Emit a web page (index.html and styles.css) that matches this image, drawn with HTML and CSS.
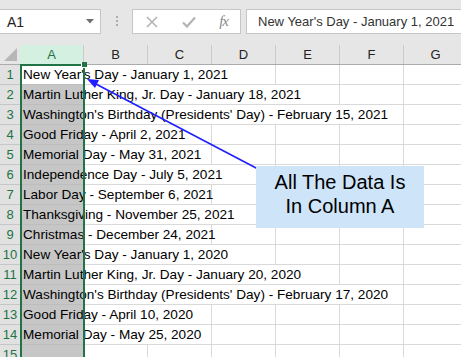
FILE: index.html
```html
<!DOCTYPE html>
<html lang="en">
<head>
    <meta charset="UTF-8">
    <title>Holidays - Column A</title>
    <link rel="stylesheet" href="styles.css">
</head>
<body>
<div class="window">
    <!-- name box + formula bar -->
    <div class="topbar">
        <div class="name-box">
            <span>A1</span>
            <svg class="caret" width="8" height="5" viewBox="0 0 8 5"><polygon points="0,0 8,0 4,4.5" fill="#707070"/></svg>
        </div>
        <div class="grip"><i></i><i></i><i></i></div>
        <div class="fx-buttons">
            <svg width="12" height="12" viewBox="0 0 12 12"><path d="M1 1 L11 11 M11 1 L1 11" stroke="#b3b3b3" stroke-width="1.6" fill="none"/></svg>
            <svg width="14" height="12" viewBox="0 0 14 12"><path d="M1 6.5 L5 10.5 L13 1.5" stroke="#b3b3b3" stroke-width="2.2" fill="none"/></svg>
            <span class="fx">fx</span>
        </div>
        <div class="formula">New Year's Day - January 1, 2021</div>
    </div>

    <div class="sheet">
        <div class="row head">
            <div class="corner"><svg width="20" height="19" viewBox="0 0 20 19"><polygon points="17,3 17,16 4,16" fill="#b7b7b7"/></svg></div>
            <div class="col sel">A</div>
            <div class="col">B</div>
            <div class="col">C</div>
            <div class="col">D</div>
            <div class="col">E</div>
            <div class="col">F</div>
            <div class="col">G</div>
        </div>

        <div class="row"><div class="rh">1</div><div class="cell a active"><span>New Year's Day - January 1, 2021</span></div><div class="cell span3"></div><div class="cell"></div><div class="cell"></div><div class="cell"></div></div>
        <div class="row"><div class="rh">2</div><div class="cell a"><span>Martin Luther King, Jr. Day - January 18, 2021</span></div><div class="cell span4"></div><div class="cell"></div><div class="cell"></div></div>
        <div class="row"><div class="rh">3</div><div class="cell a"><span>Washington's Birthday (Presidents' Day) - February 15, 2021</span></div><div class="cell span5"></div><div class="cell"></div></div>
        <div class="row"><div class="rh">4</div><div class="cell a"><span>Good Friday - April 2, 2021</span></div><div class="cell span2"></div><div class="cell"></div><div class="cell"></div><div class="cell"></div><div class="cell"></div></div>
        <div class="row"><div class="rh">5</div><div class="cell a"><span>Memorial Day - May 31, 2021</span></div><div class="cell span2"></div><div class="cell"></div><div class="cell"></div><div class="cell"></div><div class="cell"></div></div>
        <div class="row"><div class="rh">6</div><div class="cell a"><span>Independence Day - July 5, 2021</span></div><div class="cell span3"></div><div class="cell"></div><div class="cell"></div><div class="cell"></div></div>
        <div class="row"><div class="rh">7</div><div class="cell a"><span>Labor Day - September 6, 2021</span></div><div class="cell span2"></div><div class="cell"></div><div class="cell"></div><div class="cell"></div><div class="cell"></div></div>
        <div class="row"><div class="rh">8</div><div class="cell a"><span>Thanksgiving - November 25, 2021</span></div><div class="cell span3"></div><div class="cell"></div><div class="cell"></div><div class="cell"></div></div>
        <div class="row"><div class="rh">9</div><div class="cell a"><span>Christmas - December 24, 2021</span></div><div class="cell span2"></div><div class="cell"></div><div class="cell"></div><div class="cell"></div><div class="cell"></div></div>
        <div class="row"><div class="rh">10</div><div class="cell a"><span>New Year's Day - January 1, 2020</span></div><div class="cell span3"></div><div class="cell"></div><div class="cell"></div><div class="cell"></div></div>
        <div class="row"><div class="rh">11</div><div class="cell a"><span>Martin Luther King, Jr. Day - January 20, 2020</span></div><div class="cell span4"></div><div class="cell"></div><div class="cell"></div></div>
        <div class="row"><div class="rh">12</div><div class="cell a"><span>Washington's Birthday (Presidents' Day) - February 17, 2020</span></div><div class="cell span5"></div><div class="cell"></div></div>
        <div class="row"><div class="rh">13</div><div class="cell a"><span>Good Friday - April 10, 2020</span></div><div class="cell span2"></div><div class="cell"></div><div class="cell"></div><div class="cell"></div><div class="cell"></div></div>
        <div class="row"><div class="rh">14</div><div class="cell a"><span>Memorial Day - May 25, 2020</span></div><div class="cell span2"></div><div class="cell"></div><div class="cell"></div><div class="cell"></div><div class="cell"></div></div>
        <div class="row"><div class="rh">15</div><div class="cell a"></div><div class="cell"></div><div class="cell"></div><div class="cell"></div><div class="cell"></div><div class="cell"></div><div class="cell"></div></div>

        <!-- selection outline of column A -->
        <div class="selection"><div class="handle"></div></div>
    </div>

    <!-- annotation -->
    <svg class="arrow" width="461" height="357" viewBox="0 0 461 357">
        <line x1="258" y1="169" x2="94" y2="83" stroke="#1f1fff" stroke-width="1.6"/>
        <polygon points="87,79 99,80 95,88" fill="#1f1fff"/>
    </svg>
    <div class="callout">All The Data Is<br>In Column A</div>
</div>
</body>
</html>
```

FILE: styles.css
```css
/* Base */
body {
    margin: 0;
    background: #ffffff;
    font-family: "Liberation Sans", Arial, sans-serif;
    color: #000;
}

.window {
    position: relative;
    width: 461px;
    height: 357px;
    overflow: hidden;
}

/* Formula bar */
.topbar {
    display: flex;
    align-items: flex-start;
    height: 45px;
    padding-top: 9px;
    box-sizing: border-box;
    background: #e6e6e6;
}

.name-box {
    display: flex;
    flex: none;
    align-items: center;
    justify-content: space-between;
    width: 102px;
    height: 25px;
    margin-left: -1px;
    padding: 0 6px 0 7px;
    box-sizing: border-box;
    background: #fff;
    border: 1px solid #c6c6c6;
    font-size: 14px;
    color: #222;
}

.grip {
    display: flex;
    flex: none;
    flex-direction: column;
    align-items: center;
    gap: 2px;
    width: 31px;
    padding-top: 7px;
}

.grip i {
    display: block;
    width: 2px;
    height: 2px;
    background: #acacac;
}

.fx-buttons {
    display: flex;
    flex: none;
    align-items: center;
    justify-content: space-between;
    width: 109px;
    height: 25px;
    padding: 0 12px 0 13px;
    box-sizing: border-box;
    background: #fff;
    border: 1px solid #c6c6c6;
}

.fx {
    font-family: "Liberation Serif", serif;
    font-style: italic;
    font-size: 15px;
    color: #8a8a8a;
    letter-spacing: -1px;
}

.formula {
    flex: 1;
    min-width: 0;
    height: 25px;
    margin-left: 5px;
    padding-left: 11px;
    box-sizing: border-box;
    background: #fff;
    border: 1px solid #c6c6c6;
    border-right: none;
    font-size: 13px;
    line-height: 23px;
    color: #333;
    white-space: nowrap;
}

/* Sheet grid */
.sheet {
    position: relative;
}

.row {
    display: flex;
    height: 20px;
}

.row.head {
    height: 19px;
    background: #e6e6e6;
    border-bottom: 1px solid #ababab;
    box-sizing: content-box;
}

.corner {
    width: 20px;
    flex: none;
}

.col {
    width: 64px;
    flex: none;
    box-sizing: border-box;
    border-right: 1px solid #cacaca;
    text-align: center;
    font-size: 13px;
    line-height: 19px;
    color: #222;
}

.col.sel {
    background: #d3f0e0;
    color: #217346;
}

.rh {
    width: 20px;
    flex: none;
    box-sizing: border-box;
    background: #e1e1e1;
    border-bottom: 1px solid #c6c6c6;
    text-align: center;
    font-size: 13px;
    line-height: 20px;
    color: #217346;
}

.cell {
    width: 64px;
    flex: none;
    box-sizing: border-box;
    border-right: 1px solid #d9d9d9;
    border-bottom: 1px solid #d9d9d9;
}

.cell.a {
    background: #c6c6c6;
    border-right: none;
    border-bottom-color: #bdbdbd;
    white-space: nowrap;
    font-size: 13.6px;
    line-height: 20px;
    padding-left: 3px;
}

.cell.a.active {
    background: #fff;
}

.cell.a span {
    position: relative;
    z-index: 1;
}

.span2 { width: 128px; }
.span3 { width: 192px; }
.span4 { width: 256px; }
.span5 { width: 320px; }

.selection {
    position: absolute;
    left: 20px;
    top: 19px;
    width: 65px;
    height: 320px;
    box-sizing: border-box;
    border: 2px solid #217346;
    border-bottom: none;
    z-index: 2;
}

.handle {
    position: absolute;
    right: -4px;
    top: -4px;
    width: 5px;
    height: 5px;
    background: #217346;
    border: 1px solid #fff;
    border-top: none;
    border-right: none;
}

/* Annotation */
.arrow {
    position: absolute;
    left: 0;
    top: 0;
    z-index: 3;
}

.callout {
    position: absolute;
    left: 256px;
    top: 166px;
    width: 168px;
    height: 62px;
    padding-top: 4px;
    box-sizing: border-box;
    background: #cde4f9;
    text-align: center;
    font-size: 20px;
    line-height: 24px;
    color: #000;
    z-index: 3;
}
```
